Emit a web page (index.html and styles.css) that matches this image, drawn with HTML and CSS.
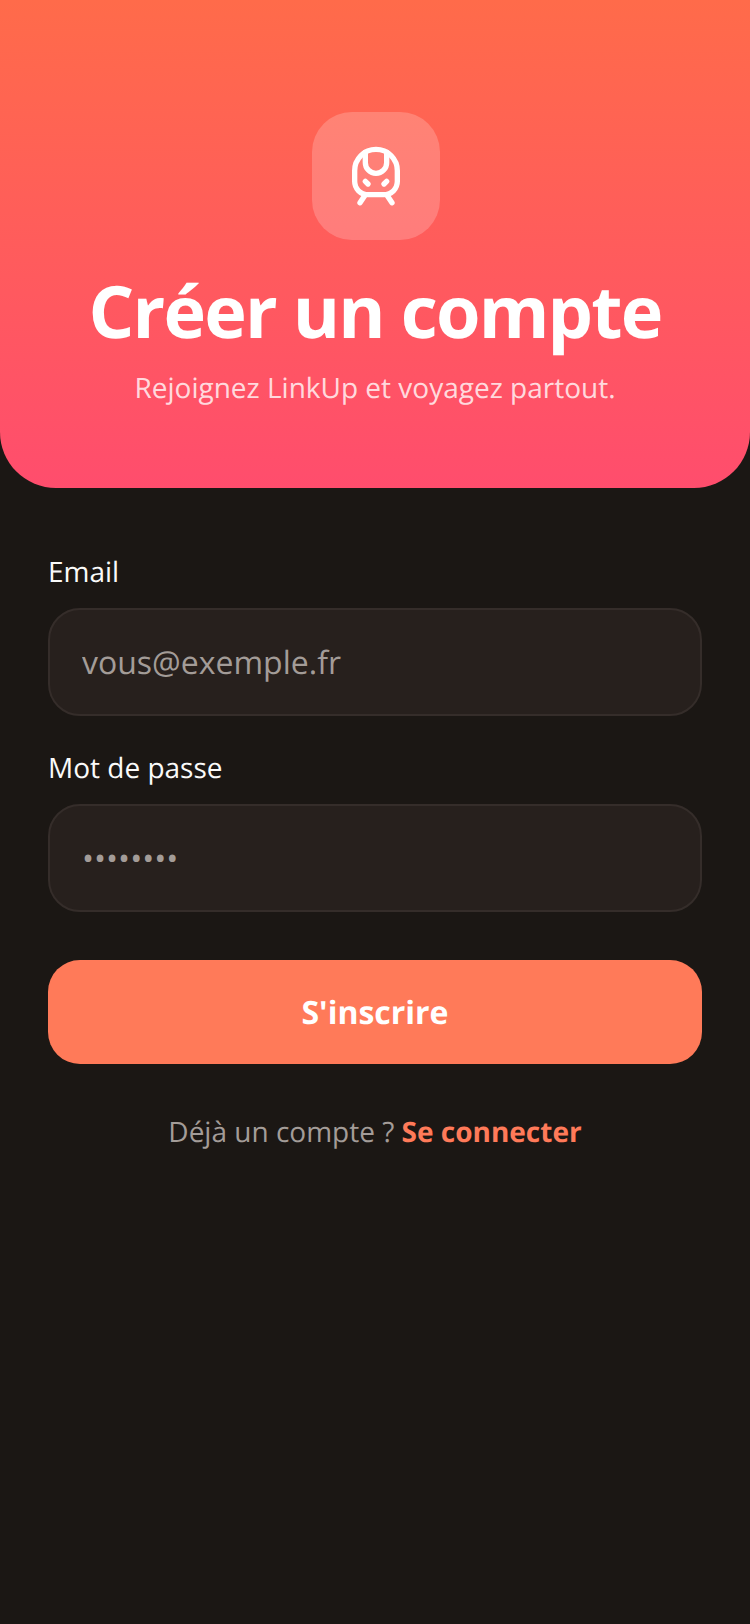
FILE: index.html
```html
<!DOCTYPE html>
<html lang="fr">
<head>
  <meta charset="UTF-8" />
  <meta name="viewport" content="width=device-width, initial-scale=1.0"/>
  <title>LinkUp - Créer un compte</title>
  <link rel="stylesheet" href="styles.css">
</head>
<body>

  <!-- Header -->
  <header class="hero">
    <div class="logo-box">
      <svg class="logo-icon" viewBox="0 0 24 24" fill="none" stroke="currentColor" stroke-width="2" stroke-linecap="round" stroke-linejoin="round">
        <path d="M8 3.1V7a4 4 0 0 0 8 0V3.1"/>
        <path d="m9 15-1-1"/>
        <path d="m15 15 1-1"/>
        <path d="M9 19c-2.8 0-5-2.2-5-5v-4a8 8 0 0 1 16 0v4c0 2.8-2.2 5-5 5Z"/>
        <path d="m8 19-2 3"/>
        <path d="m16 19 2 3"/>
      </svg>
    </div>
    <h1>Créer un compte</h1>
    <p class="subtitle">Rejoignez LinkUp et voyagez partout.</p>
  </header>

  <!-- Form -->
  <form class="signup-form">
    <div class="field">
      <label for="email">Email</label>
      <input id="email" type="email" placeholder="vous@exemple.fr">
    </div>
    <div class="field">
      <label for="password">Mot de passe</label>
      <input id="password" type="password" placeholder="••••••••">
    </div>
    <button class="submit-button" type="button">S'inscrire</button>
    <p class="login-line">Déjà un compte ? <a href="#">Se connecter</a></p>
  </form>

</body>
</html>
```

FILE: styles.css
```css
*, *::before, *::after {
  box-sizing: border-box;
}

body, html {
  margin: 0;
  padding: 0;
  width: 100%;
  height: 100%;
  font-family: 'Open Sans', sans-serif;
  text-rendering: geometricPrecision;
  background: #1b1714;
  overflow: hidden;
}

.hero {
  height: 488px;
  padding-top: 112px;
  display: flex;
  flex-direction: column;
  align-items: center;
  text-align: center;
  background: linear-gradient(180deg, #ff6b4a 0%, #ff4d6d 100%);
  border-radius: 0 0 56px 56px;
  color: #fff;
}

.logo-box {
  width: 128px;
  height: 128px;
  margin: 0 0 31px 2px;
  display: flex;
  align-items: center;
  justify-content: center;
  border-radius: 40px;
  background: rgba(255, 255, 255, 0.2);
}

.logo-icon {
  width: 64px;
  height: 64px;
}

h1 {
  margin: 0 0 17px;
  font-size: 72px;
  line-height: 80px;
  font-weight: 700;
  letter-spacing: -1.8px;
}

.subtitle {
  margin: 0;
  font-size: 28px;
  line-height: 40px;
  color: rgba(255, 255, 255, 0.8);
}

.signup-form {
  padding: 64px 48px 0;
  display: flex;
  flex-direction: column;
}

.field {
  display: flex;
  flex-direction: column;
  gap: 16px;
  margin-bottom: 32px;
}

label {
  font-size: 28px;
  line-height: 40px;
  color: #fafaf9;
}

input {
  width: 100%;
  height: 108px;
  padding: 0 32px;
  border: 2px solid #352d2a;
  border-radius: 32px;
  background: #27201d;
  color: #fafaf9;
  font-family: 'Open Sans', sans-serif;
  font-size: 32px;
  text-rendering: geometricPrecision;
  outline: none;
}

input::placeholder {
  color: #a39c98;
  opacity: 1;
}

.submit-button {
  height: 104px;
  margin-top: 16px;
  padding: 0;
  border: none;
  border-radius: 32px;
  background: #ff7a59;
  color: #fff;
  font-family: 'Open Sans', sans-serif;
  font-size: 32px;
  font-weight: 700;
  text-rendering: geometricPrecision;
  cursor: pointer;
}

.login-line {
  margin: 48px 0 0;
  text-align: center;
  font-size: 28px;
  line-height: 40px;
  color: #a39c98;
}

.login-line a {
  color: #ff7a59;
  font-weight: 700;
  text-decoration: none;
}
```
